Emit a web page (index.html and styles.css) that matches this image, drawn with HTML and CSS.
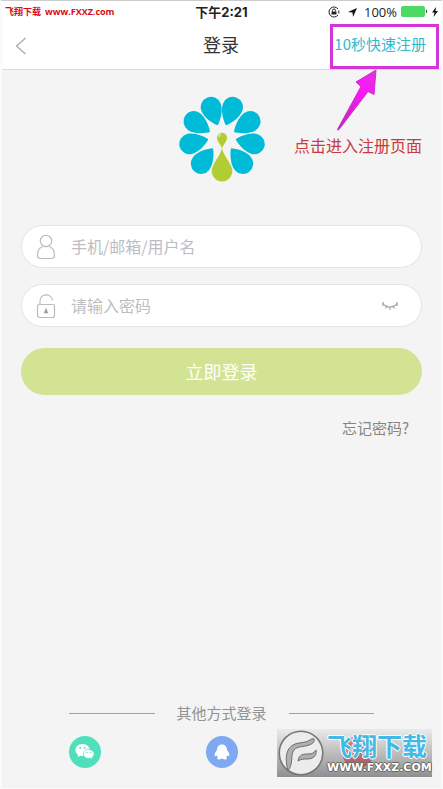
FILE: index.html
```html
<!DOCTYPE html>
<html lang="zh-CN">
<head>
<meta charset="utf-8">
<meta name="viewport" content="width=device-width, initial-scale=1">
<title>登录</title>
<link rel="stylesheet" href="styles.css">
</head>
<body>
<div class="screen">
  <header class="top">
    <div class="status">
      <div class="site"><span class="site-name">飞翔下载</span> <span>www.FXXZ.com</span></div>
      <div class="time">下午2:21</div>
      <div class="indicators">
        <svg width="13" height="12" viewBox="0 0 13 12" fill="none" stroke="#222"><path d="M10 3A5 5 0 1 0 10 9M10.800 4.500v3"/><path d="M4.500 5.500V4.500a1.500 1.500 0 0 1 3 0v1"/><path d="M3.500 5.500h5v3h-5z" fill="#222" stroke="none"/></svg>
        <svg class="locate" width="9" height="9" viewBox="0 0 9 9"><path d="M9 0 5 9 4.500 4.500 0 4z" fill="#111"/></svg>
        <span class="percent">100%</span>
        <svg width="27" height="12" viewBox="0 0 27 12"><rect width="24" height="11" rx="2" fill="#4cd964"/><path d="M25 3.500q2 2 0 4z" fill="#222"/></svg>
        <svg width="6" height="10" viewBox="0 0 6 10"><path d="M4 0 0 5.500h2.500L1.500 10 6 4H3.500z" fill="#111"/></svg>
      </div>
    </div>
    <nav class="nav">
      <button class="back" type="button" aria-label="返回"><svg width="12" height="18" viewBox="0 0 12 18" fill="none" stroke="#a9a9a9" stroke-width="1.300"><path d="M10.500 1 1.500 9l9 8"/></svg></button>
      <h1 class="title">登录</h1>
      <div class="callout">
        <a class="register" href="#register">10秒快速注册</a>
        <div class="note">
          <svg class="arrow" width="42" height="62" viewBox="0 0 42 62"><defs><linearGradient id="pink" x1="1" y1="0" x2="0" y2="1"><stop offset="0" stop-color="#d834dc"/><stop offset=".35" stop-color="#ff16fa"/><stop offset="1" stop-color="#b32eaf"/></linearGradient></defs><path d="M40 1 20 13l5 4.500L2 59.500 1.500 61 3 60.500 32 22.500l6 3z" fill="url(#pink)" stroke="#d029cf"/></svg>
          <p class="note-text">点击进入注册页面</p>
        </div>
      </div>
    </nav>
  </header>

  <main class="main">
    <svg class="logo" width="86" height="86" viewBox="56 33 258 258" role="img" aria-label="标志">
      <defs><path id="drop" d="M0 0C-12 10-31 36-31 58a31 31 0 0 0 62 0C31 36 12 10 0 0z"/></defs>
      <g fill="#00bbd8">
        <use href="#drop" transform="translate(172 121) rotate(160)"/>
        <use href="#drop" transform="translate(197 121) rotate(-160)"/>
        <use href="#drop" transform="translate(149 141) rotate(123)"/>
        <use href="#drop" transform="translate(221 141) rotate(-123)"/>
        <use href="#drop" transform="translate(144 163) rotate(76)"/>
        <use href="#drop" transform="translate(226 163) rotate(-76)"/>
        <use href="#drop" transform="translate(158 190) rotate(38)"/>
        <use href="#drop" transform="translate(212 190) rotate(-38)"/>
      </g>
      <path d="M185 188C183 205 165 225 157 245a31 31 0 1 0 56 0C205 225 187 205 185 188zM185 194C185 180 170 172 170 158a15 15 0 0 1 30 0C200 172 185 180 185 194z" fill="#b2cd33"/>
      <path d="M174 158q-2-10 9-13-1 10-9 13z" fill="#dce79c"/>
    </svg>

    <form class="form">
      <label class="field">
        <svg width="20" height="26" viewBox="0 0 20 26" fill="none" stroke="#bcbcbc" stroke-width="1.200"><circle cx="10" cy="7" r="5.700"/><path d="M6.500 12.500C3 14 1.500 17 1.500 21.500q0 3 3 3h11q3 0 3-3c0-4.500-1.500-7.500-5-9"/></svg>
        <input type="text" placeholder="手机/邮箱/用户名" aria-label="手机/邮箱/用户名">
      </label>
      <div class="field">
        <svg width="20" height="26" viewBox="0 0 20 26" fill="none" stroke="#bcbcbc" stroke-width="1.200"><rect x="1.500" y="11.500" width="17" height="13" rx="2"/><path d="M4 11.500V8C4 0 15.500 0 16.500 7.500"/><path d="M10 15.500l1.700 4.500H8.300z" fill="#999" stroke="#999" stroke-width=".6"/></svg>
        <input type="password" placeholder="请输入密码" aria-label="请输入密码">
        <button class="eye" type="button" aria-label="显示密码"><svg width="18" height="10" viewBox="0 0 18 10" fill="none" stroke="#aaa" stroke-width="1.200"><path d="M1 2.500q8 7 16 0M2.500 1l-.8 4M5.500 5 4.500 7.500M9 6v3M12.500 5l1 2.500M15.500 1l.8 4"/></svg></button>
      </div>
      <button class="submit" type="submit">立即登录</button>
      <a class="forgot" href="#forgot">忘记密码?</a>
    </form>
  </main>

  <footer class="others">
    <div class="divider"><span>其他方式登录</span></div>
    <div class="socials">
      <button class="social wechat" type="button" aria-label="微信"><svg width="20" height="18" viewBox="0 0 20 18"><path d="M7.500 1C3 1 .500 4 .500 7c0 2 1 3.500 2.500 4.700L2.500 14l2.700-1.300q1.500.4 3 .3A5.800 5.800 0 0 1 14.500 6C14 3 11 1 7.500 1z" fill="#fff"/><path d="M13.500 6.500c-3 0-5.200 2-5.200 4.300 0 2.500 2.300 4.500 5.200 4.500q1 0 2-.3l2.200 1.200-.6-2c1.300-1 2-2 2-3.400 0-2.300-2.600-4.300-5.600-4.300z" fill="#fff" stroke="#4fdfba" stroke-width=".5"/><g fill="#4fdfba"><circle cx="5.200" cy="5" r=".9"/><circle cx="9.800" cy="5" r=".9"/><circle cx="12" cy="9.500" r=".7"/><circle cx="15.500" cy="9.500" r=".7"/></g></svg></button>
      <button class="social qq" type="button" aria-label="QQ"><svg width="16" height="16" viewBox="0 0 16 16"><path d="M8 .500C4.500.500 3 3 3 6 1.500 8 .500 9.500.700 12q.6.800 1.800-.8.500 1.200 1.300 2-1.500 1 0 2 2.200.6 4.200-.6 2 1.200 4.200.6 1.500-1 0-2 .8-.8 1.300-2 1.200 1.600 1.800.8C15.500 9.500 14.500 8 13 6c0-3-1.500-5.500-5-5.500z" fill="#fff"/></svg></button>
      <button class="social weibo" type="button" aria-label="微博"></button>
    </div>
    <div class="watermark">
      <svg width="46" height="46" viewBox="0 0 46 46"><circle cx="23" cy="23" r="21.800" fill="#ececec" stroke="#777" stroke-width="1.600"/><path d="M10 41C7 29 7 18 17 14c6-2 11-1 15-4q2-2 4-1c1 3-2 5-5 6-5 2-12 1-15 5-4 5 0 12-6 21z" fill="#b0b0b0" stroke="#6c6c6c"/><path d="M20 31c1-7 6-7 10-7s6-1 8-4c1 6-3 9-9 9-3 0-6 0-9 2z" fill="#b0b0b0" stroke="#6c6c6c"/></svg>
      <div class="wm-text"><span class="wm-name">飞翔下载</span><span class="wm-url">WWW.FXXZ.COM</span></div>
    </div>
  </footer>
</div>
</body>
</html>
```

FILE: styles.css
```css
* { box-sizing: border-box; }

body {
  margin: 0;
  background: #fff;
  font-family: "Noto Sans CJK SC", sans-serif;
  color: #333;
}

button {
  padding: 0;
  border: 0;
  background: none;
  font: inherit;
}

a { text-decoration: none; }
svg { display: block; flex: none; }

.screen {
  display: flex;
  flex-direction: column;
  min-height: 100vh;
  border: 1px solid #fafafa;
  border-top-color: #ccc;
  border-width: 1px 2px;
  background: #f4f4f4;
}

.top {
  background: #fff;
  border-bottom: 1px solid #dedede;
}

.status,
.nav {
  display: grid;
  grid-template-columns: minmax(0, 1fr) auto minmax(0, 1fr);
  align-items: center;
}

.status {
  height: 22px;
  padding: 0 3px;
}

.site {
  display: flex;
  gap: 4px;
  color: #d90b10;
  font: bold 9px/16px "Open Sans", "Noto Sans CJK SC", sans-serif;
  white-space: nowrap;
}

.time {
  font: bold 13px/18px Inter, "Noto Sans CJK SC", sans-serif;
  color: #222;
}

.indicators {
  display: flex;
  align-items: center;
  justify-content: flex-end;
  gap: 4px;
}

.locate { margin: 0 3px; }

.percent {
  font: 13px/18px "Open Sans", sans-serif;
  color: #222;
}

.nav {
  height: 46px;
  padding: 0 2px 0 13px;
}

.back {
  display: flex;
  align-items: center;
  width: 24px;
  height: 40px;
}

.title {
  margin: 0;
  padding: 0 12px 4px 0;
  font-size: 18px;
  line-height: 24px;
  font-weight: 400;
}

.callout {
  position: relative;
  justify-self: end;
}

.register {
  display: block;
  padding: 6px 10px 11px 1px;
  border: 3px solid #d534d8;
  color: #32b9cb;
  font-size: 15px;
  line-height: 22px;
  white-space: nowrap;
}

.note {
  position: absolute;
  top: 100%;
  right: 17px;
}

.arrow { margin-left: 42px; }

.note-text {
  margin: 4px 0 0;
  color: #c63c3c;
  font-size: 16px;
  line-height: 20px;
  white-space: nowrap;
}

.main {
  flex: 1;
  padding: 26px 19px 0;
}

.logo { margin: 0 auto; }

.form {
  display: flex;
  flex-direction: column;
  gap: 16px;
  margin-top: 43px;
}

.field {
  display: flex;
  align-items: center;
  gap: 15px;
  height: 43px;
  padding: 0 22px 0 14px;
  border: 1px solid #e4e4e4;
  border-radius: 22px;
  background: #fff;
}

.field input {
  flex: 1;
  min-width: 0;
  padding: 0 0 2px;
  border: 0;
  outline: 0;
  background: none;
  color: #333;
  font: 16px/24px "Noto Sans CJK SC", sans-serif;
}

.field input::placeholder { color: #bdbdc1; opacity: 1; }

.submit {
  height: 47px;
  margin-top: 5px;
  padding-bottom: 2px;
  border-radius: 24px;
  background: #d2e394;
  color: #fff;
  font-size: 18px;
}

.forgot {
  align-self: flex-end;
  margin-right: 13px;
  color: #858585;
  font-size: 15px;
  line-height: 34px;
}

.others {
  position: relative;
  padding: 0 67px 20px;
}

.divider {
  display: flex;
  align-items: center;
  gap: 22px;
  color: #929292;
  font-size: 15px;
  line-height: 22px;
  white-space: nowrap;
}

.divider::before,
.divider::after {
  content: "";
  flex: 1;
  height: 1px;
  background: #a0a0a0;
}

.socials {
  display: flex;
  justify-content: space-between;
  margin-top: 12px;
}

.social {
  display: flex;
  align-items: center;
  justify-content: center;
  width: 32px;
  height: 32px;
  border-radius: 50%;
}

.wechat { background: #4fdfba; }
.qq { background: #7fa8f3; }
.weibo { background: #f0404c; }

.watermark {
  position: absolute;
  right: 9px;
  bottom: 11px;
  display: flex;
  align-items: center;
  gap: 3px;
  width: 155px;
  height: 48px;
  padding-left: 1px;
  background: linear-gradient(rgba(225, 225, 225, .5), rgba(90, 90, 90, .65));
}

.wm-text {
  display: flex;
  flex-direction: column;
  white-space: nowrap;
}

.wm-name {
  color: #43b9e5;
  font-size: 25px;
  line-height: 30px;
  font-weight: 700;
  text-shadow: 1px 0 #fff, -1px 0 #fff, 0 1px #fff, 0 -1px #fff;
}

.wm-url {
  color: #fff;
  font: bold 11px/16px "DejaVu Sans", sans-serif;
  text-shadow: 1px 0 #666, -1px 0 #666, 0 1px #666, 0 -1px #666;
}
```
